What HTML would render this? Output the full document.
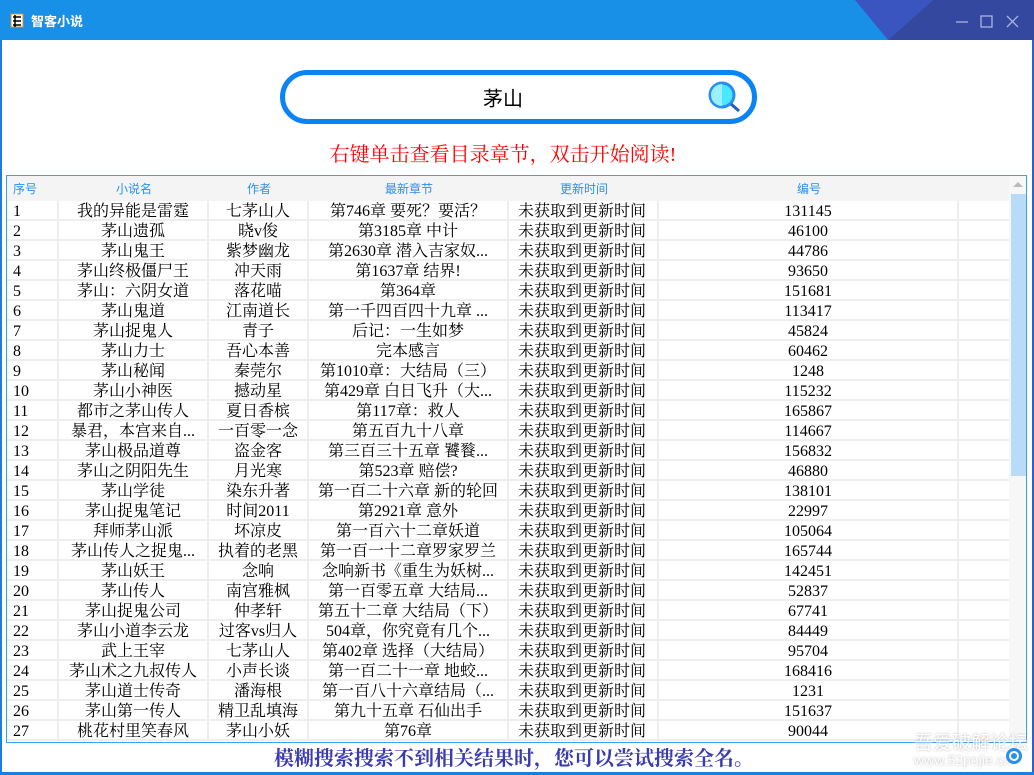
<!DOCTYPE html><html><head><meta charset="utf-8"><style>
*{margin:0;padding:0;box-sizing:border-box}
body{width:1034px;height:775px;overflow:hidden;background:#fff;position:relative;font-family:"Liberation Serif","Noto Serif CJK SC",serif}
.tb{position:absolute;left:0;top:0;width:1034px;height:40px;background:#1890e8;overflow:hidden}
.wb{position:absolute;background:#1a7de0}
.t{position:absolute;font-family:"Liberation Sans","Noto Sans CJK SC",sans-serif;color:#fff;font-weight:bold;font-size:13px;left:31px;top:11px}
.search{position:absolute;left:280px;top:70px;width:477px;height:54px;border:5px solid #0a84f5;border-radius:27px}
.q{position:absolute;left:0;top:97px;text-align:center;font-size:20px;font-family:"Liberation Sans","Noto Sans CJK SC",sans-serif;transform:translateY(-50%)}
.tip{position:absolute;left:0;width:1006px;text-align:center;top:138px;font-size:20px;color:#f00}
.tbl{position:absolute;left:6px;top:175px;width:1021px;height:568px;border:1px solid #3aa0f0;overflow:hidden}
.hd{position:absolute;left:0;top:0;height:25px;width:1002px;background:#f4f4f4;font-family:"Liberation Sans","Noto Sans CJK SC",sans-serif;font-size:12px;color:#2a90f0}
.hd span{position:absolute;top:4px;text-align:center}
.row{position:absolute;left:0;width:1002px;height:20px;border-bottom:2px solid #eee;font-size:16px;line-height:21px;color:#000}
.row span{position:absolute;top:0;height:20px;text-align:center;white-space:nowrap;overflow:hidden;border-right:2px solid #eee}
.sb{position:absolute;left:1002px;top:0;width:18px;height:566px;background:#f7f7f7}
.bot{position:absolute;left:0;width:1028px;text-align:center;top:742px;font-size:20px;color:#3b3bb0;font-weight:bold}
</style></head><body>
<div class="tb">
<svg style="position:absolute;left:0;top:0" width="1034" height="40"><polygon points="855,0 933,0 888,40" fill="#3a55c0"/><polygon points="933,0 1034,0 1034,40 888,40" fill="#3448a0"/>
<g stroke="#aab4e8" stroke-width="1.3" fill="none"><line x1="956" y1="22" x2="968" y2="22"/><rect x="981" y="16" width="11" height="11"/><line x1="1007" y1="16" x2="1018" y2="27"/><line x1="1018" y1="16" x2="1007" y2="27"/></g>
<rect x="11" y="14" width="12" height="13" fill="#fff" stroke="#d09030"/><g stroke="#000" stroke-width="1.5"><line x1="13" y1="17" x2="21" y2="17"/><line x1="13" y1="21" x2="21" y2="21"/><line x1="13" y1="25" x2="21" y2="25"/><line x1="15" y1="15" x2="15" y2="27"/></g></svg>
<div class="t">智客小说</div></div>
<div class="wb" style="left:0;top:40px;width:2px;height:735px"></div>
<div class="wb" style="left:1032px;top:40px;width:2px;height:735px;background:#2a62c8"></div>
<div class="wb" style="left:0;top:772px;width:1034px;height:3px"></div>
<div class="search"></div>
<div class="q" style="left:0;width:1006px">茅山</div>
<svg style="position:absolute;left:706px;top:79px" width="36" height="36"><circle cx="16" cy="16" r="12" fill="#4ae8ff" stroke="#2a8ef0" stroke-width="3"/><path d="M16 5 A11 11 0 0 0 16 27Z" fill="#9af0ff"/><line x1="25" y1="25" x2="33" y2="32" stroke="#2060c0" stroke-width="3"/></svg>
<div class="tip">右键单击查看目录章节，双击开始阅读!</div>
<div class="tbl">
<div class="hd"><span style="left:6px">序号</span><span style="left:52px;width:150px">小说名</span><span style="left:202px;width:100px">作者</span><span style="left:302px;width:200px">最新章节</span><span style="left:502px;width:150px">更新时间</span><span style="left:652px;width:300px">编号</span></div>
<div id="rows"></div>
<div class="sb"><svg width="18" height="20"><polygon points="4,11 9,6 14,11" fill="#bbb"/></svg><div style="position:absolute;left:2px;top:18px;width:16px;height:282px;background:#b8dcf8"></div></div>
</div>
<div class="bot">模糊搜索搜索不到相关结果时，您可以尝试搜索全名。</div>
<div style="position:absolute;left:914px;top:728px;color:#fff;opacity:.75;font-size:19px;font-family:'Liberation Sans','Noto Sans CJK SC',sans-serif;text-shadow:0 0 2px #999">吾爱破解论坛</div>
<div style="position:absolute;left:914px;top:752px;color:#fff;opacity:.75;font-size:14px;font-family:'Liberation Sans',sans-serif;text-shadow:0 0 2px #999">www.52pojie.cn</div>
<svg style="position:absolute;left:1004px;top:746px" width="20" height="20"><circle cx="10" cy="10" r="8" fill="#2a8ef0"/><circle cx="10" cy="10" r="4" fill="none" stroke="#fff" stroke-width="2"/></svg>
<script>
var d=[["我的异能是雷霆","七茅山人","第746章 要死？要活？","131145"],["茅山遗孤","晓v俊","第3185章 中计","46100"],["茅山鬼王","紫梦幽龙","第2630章 潜入吉家奴...","44786"],["茅山终极僵尸王","冲天雨","第1637章 结界!","93650"],["茅山：六阴女道","落花喵","第364章","151681"],["茅山鬼道","江南道长","第一千四百四十九章 ...","113417"],["茅山捉鬼人","青子","后记：一生如梦","45824"],["茅山力士","吾心本善","完本感言","60462"],["茅山秘闻","秦莞尔","第1010章：大结局（三）","1248"],["茅山小神医","撼动星","第429章 白日飞升（大...","115232"],["都市之茅山传人","夏日香槟","第117章：救人","165867"],["暴君，本宫来自...","一百零一念","第五百九十八章","114667"],["茅山极品道尊","盗金客","第三百三十五章 饕餮...","156832"],["茅山之阴阳先生","月光寒","第523章 赔偿?","46880"],["茅山学徒","染东升著","第一百二十六章 新的轮回","138101"],["茅山捉鬼笔记","时间2011","第2921章 意外","22997"],["拜师茅山派","坏凉皮","第一百六十二章妖道","105064"],["茅山传人之捉鬼...","执着的老黑","第一百一十二章罗家罗兰","165744"],["茅山妖王","念响","念响新书《重生为妖树...","142451"],["茅山传人","南宫雅枫","第一百零五章  大结局...","52837"],["茅山捉鬼公司","仲孝轩","第五十二章 大结局（下）","67741"],["茅山小道李云龙","过客vs归人","504章，你究竟有几个...","84449"],["武上王宰","七茅山人","第402章 选择（大结局）","95704"],["茅山术之九叔传人","小声长谈","第一百二十一章 地蛟...","168416"],["茅山道士传奇","潘海根","第一百八十六章结局（...","1231"],["茅山第一传人","精卫乱填海","第九十五章 石仙出手","151637"],["桃花村里笑春风","茅山小妖","第76章","90044"]];
var h="";d.forEach(function(r,i){h+='<div class="row" style="top:'+(25+i*20)+'px"><span style="left:0;width:52px;text-align:left;padding-left:6px">'+(i+1)+'</span><span style="left:52px;width:150px">'+r[0]+'</span><span style="left:202px;width:100px">'+r[1]+'</span><span style="left:302px;width:200px">'+r[2]+'</span><span style="left:502px;width:150px;text-align:left;padding-left:9px">未获取到更新时间</span><span style="left:652px;width:300px">'+r[3]+'</span><span style="left:952px;width:50px;border:0"></span></div>'});
document.getElementById("rows").innerHTML=h;
</script>
</body></html>
